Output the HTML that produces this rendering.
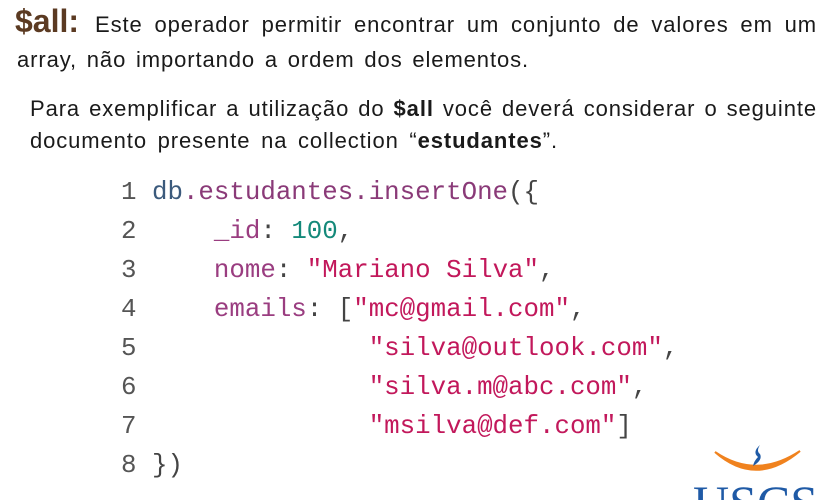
<!DOCTYPE html>
<html><head><meta charset="utf-8"><style>
html,body{margin:0;width:827px;height:500px;overflow:hidden}
body{background:#fff;position:relative;font-family:"Liberation Sans",sans-serif;color:#1a1a1a}
.t{position:absolute;white-space:nowrap;font-size:22px;letter-spacing:0.9px;text-align:justify;text-align-last:justify;overflow:hidden}
.c{position:absolute;left:121px;font-family:"Liberation Mono",monospace;font-size:25.8px;white-space:pre;color:#444}
.n{color:#555}.db{color:#3b5a7c}.p{color:#8a3a78}.num{color:#14897a}.s{color:#c2185b}.k{color:#9a3d80}
</style></head><body>
<div class="t" style="left:15px;top:3px;font-size:32px;font-weight:bold;color:#5b3a22;letter-spacing:0;text-align:left;text-align-last:left">$all:</div>
<div class="t" style="left:95px;top:12px;width:722px">Este operador permitir encontrar um conjunto de valores em um</div>
<div class="t" style="left:17px;top:47px;width:512px">array, não importando a ordem dos elementos.</div>
<div class="t" style="left:30px;top:96px;width:787px">Para exemplificar a utilização do <b>$all</b> você deverá considerar o seguinte</div>
<div class="t" style="left:30px;top:128px;width:528px">documento presente na collection “<b>estudantes</b>”.</div>
<div class="c" style="top:178px"><span class="n">1</span> <span class="db">db</span><span class="p">.estudantes.insertOne</span>({</div>
<div class="c" style="top:217px"><span class="n">2</span>     <span class="k">_id</span>: <span class="num">100</span>,</div>
<div class="c" style="top:256px"><span class="n">3</span>     <span class="k">nome</span>: <span class="s">"Mariano Silva"</span>,</div>
<div class="c" style="top:295px"><span class="n">4</span>     <span class="k">emails</span>: [<span class="s">"mc@gmail.com"</span>,</div>
<div class="c" style="top:334px"><span class="n">5</span>               <span class="s">"silva@outlook.com"</span>,</div>
<div class="c" style="top:373px"><span class="n">6</span>               <span class="s">"silva.m@abc.com"</span>,</div>
<div class="c" style="top:412px"><span class="n">7</span>               <span class="s">"msilva@def.com"</span>]</div>
<div class="c" style="top:451px"><span class="n">8</span> })</div>
<svg style="position:absolute;left:690px;top:440px;overflow:hidden" width="137" height="60">
<path d="M25 12 Q66 48 110 11 Q66 40 25 12Z" fill="#f0821e" stroke="#f0821e" stroke-width="2"/>
<path d="M70 5 Q62 12 68 17 Q64 21 63 26 Q73 20 70 14 Q66 11 70 5Z" fill="#1f5aa6"/>
<text x="3" y="80" font-family="Liberation Serif,serif" font-size="50" fill="#1f5aa6">USCS</text>
</svg>
</body></html>
